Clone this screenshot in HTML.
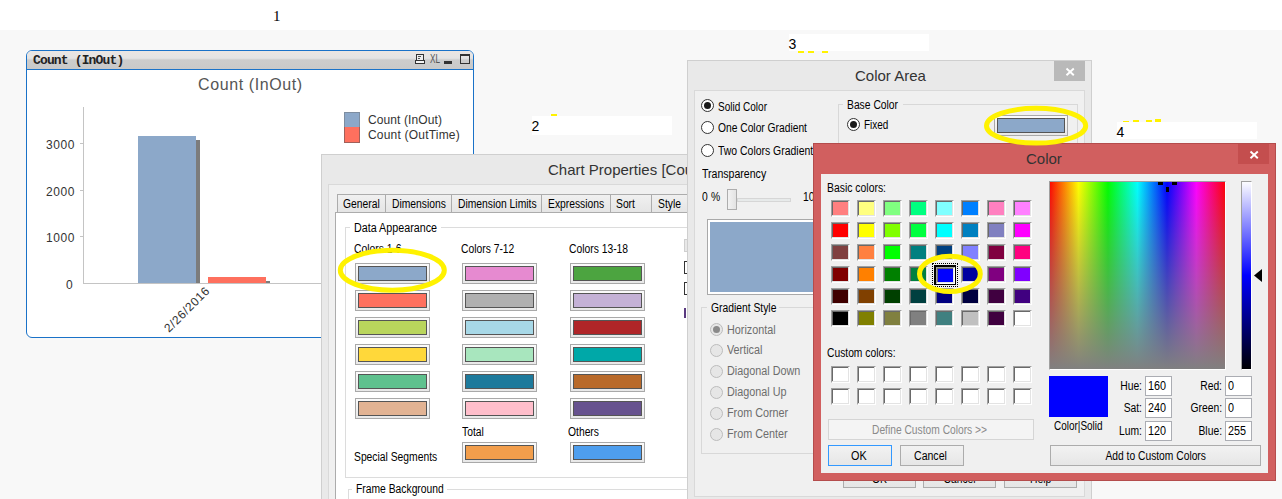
<!DOCTYPE html>
<html><head><meta charset="utf-8">
<style>
*{margin:0;padding:0;box-sizing:border-box}
html,body{width:1282px;height:499px;overflow:hidden;background:#f8f8f8;font-family:"Liberation Sans",sans-serif;font-size:12px;color:#000}
.a{position:absolute}
.t{position:absolute;white-space:nowrap;line-height:1;transform-origin:0 0}
.s{transform:scaleX(.86)}
.bx{position:absolute;box-sizing:border-box}
</style></head><body>
<!-- top white band -->
<div class="a" style="left:0;top:0;width:1282px;height:30px;background:#fff"></div>
<div class="t" style="left:273px;top:9px;font-size:15px;font-family:'Liberation Serif',serif">1</div>

<!-- ============ CHART WINDOW ============ -->
<div class="bx" style="left:26px;top:50px;width:448px;height:288px;border:1px solid #1a72c8;border-radius:6px;background:#fff;overflow:hidden">
  <div class="a" style="left:0;top:0;width:446px;height:19px;background:linear-gradient(#ebe6e3 0,#e4e4e4 40%,#cccccc 50%,#c9c9c9 100%);border-bottom:1px solid #1a72c8"></div>
</div>
<div class="t" style="left:33px;top:54px;font-family:'Liberation Mono',monospace;font-weight:bold;font-size:13px;letter-spacing:-.85px;color:#222">Count (InOut)</div>
<!-- window icons -->
<svg class="a" style="left:412px;top:52px" width="62" height="14" viewBox="0 0 62 14">
  <g fill="none" stroke="#333" stroke-width="1">
    <rect x="4.5" y="2.5" width="7" height="6" fill="#eee"/>
    <rect x="3.5" y="8.5" width="9" height="3" fill="#f4f4f4"/>
    <line x1="6" y1="4.5" x2="9" y2="4.5" stroke="#555"/><line x1="6" y1="6.5" x2="8" y2="6.5" stroke="#555"/>
  </g>
  <text x="18" y="11" font-family="Liberation Sans" font-size="12" fill="#555" textLength="10" lengthAdjust="spacingAndGlyphs">XL</text>
  <rect x="32" y="9" width="8" height="3" fill="#333"/>
  <rect x="48.5" y="2.5" width="9" height="9" fill="none" stroke="#333"/>
  <rect x="48" y="2" width="10" height="2" fill="#333"/>
</svg>
<!-- chart -->
<div class="t" style="left:198px;top:77px;font-size:16px;color:#555;letter-spacing:.6px">Count (InOut)</div>
<div class="a" style="left:83px;top:107px;width:1px;height:177px;background:#c4c4c4"></div>
<div class="a" style="left:83px;top:283px;width:240px;height:1px;background:#c4c4c4"></div>
<div class="a" style="left:80px;top:143px;width:3px;height:1px;background:#c4c4c4"></div>
<div class="a" style="left:80px;top:190px;width:3px;height:1px;background:#c4c4c4"></div>
<div class="a" style="left:80px;top:236px;width:3px;height:1px;background:#c4c4c4"></div>
<div class="t" style="left:46px;top:139px;font-size:12px;color:#333;letter-spacing:.6px">3000</div>
<div class="t" style="left:46px;top:186px;font-size:12px;color:#333;letter-spacing:.6px">2000</div>
<div class="t" style="left:46px;top:232px;font-size:12px;color:#333;letter-spacing:.6px">1000</div>
<div class="t" style="left:66px;top:279px;font-size:12px;color:#333">0</div>
<div class="a" style="left:196px;top:140px;width:4px;height:143px;background:#7c7c7c"></div>
<div class="a" style="left:138px;top:136px;width:58px;height:147px;background:#8ca8c9"></div>
<div class="a" style="left:266px;top:281px;width:4px;height:2px;background:#7c7c7c"></div>
<div class="a" style="left:208px;top:277px;width:58px;height:6px;background:#fe705e"></div>
<div class="t" style="left:162px;top:325.5px;font-size:12px;letter-spacing:.6px;color:#333;transform:rotate(-45deg);transform-origin:0 0">2/26/2016</div>
<!-- legend -->
<div class="bx" style="left:344px;top:112px;width:16px;height:16px;border:1px solid #7d8da0;border-bottom:none;background:#8ca8c9"></div>
<div class="bx" style="left:344px;top:127px;width:16px;height:16px;border:1px solid #a0605a;border-top:none;background:#fe705e"></div>
<div class="t" style="left:368px;top:114px;font-size:12px;letter-spacing:.1px;color:#333">Count (InOut)</div>
<div class="t" style="left:368px;top:129px;font-size:12px;letter-spacing:.2px;color:#333">Count (OutTime)</div>

<!-- ============ "2" label ============ -->
<div class="a" style="left:532px;top:116px;width:140px;height:19px;background:#fff"></div>
<div class="t" style="left:531.5px;top:119px;font-size:14px">2</div>

<!-- ============ CHART PROPERTIES ============ -->
<div class="bx" style="left:321px;top:154px;width:400px;height:360px;border:1px solid #cfcfcf;background:#e9e9e9"></div>
<div class="t" style="left:548px;top:162px;font-size:15px;color:#333">Chart Properties [Cou</div>
<div class="bx" style="left:328px;top:184px;width:400px;height:330px;border:1px solid #d9d9d9;background:#f0f0f0"></div>
<div class="bx" style="left:337px;top:194px;width:49px;height:19px;border:1px solid #acacac;background:linear-gradient(#f0f0f0,#e5e5e5)"></div>
<div class="bx" style="left:385px;top:194px;width:67px;height:19px;border:1px solid #acacac;background:linear-gradient(#f0f0f0,#e5e5e5)"></div>
<div class="bx" style="left:451px;top:194px;width:91px;height:19px;border:1px solid #acacac;background:linear-gradient(#f0f0f0,#e5e5e5)"></div>
<div class="bx" style="left:541px;top:194px;width:70px;height:19px;border:1px solid #acacac;background:linear-gradient(#f0f0f0,#e5e5e5)"></div>
<div class="bx" style="left:610px;top:194px;width:42px;height:19px;border:1px solid #acacac;background:linear-gradient(#f0f0f0,#e5e5e5)"></div>
<div class="bx" style="left:651px;top:194px;width:70px;height:19px;border:1px solid #acacac;background:linear-gradient(#f0f0f0,#e5e5e5)"></div>
<div class="t s" style="left:343px;top:197.5px;font-size:12px;color:#000;">General</div>
<div class="t s" style="left:392px;top:197.5px;font-size:12px;color:#000;">Dimensions</div>
<div class="t s" style="left:458px;top:197.5px;font-size:12px;color:#000;">Dimension Limits</div>
<div class="t s" style="left:548px;top:197.5px;font-size:12px;color:#000;">Expressions</div>
<div class="t s" style="left:616px;top:197.5px;font-size:12px;color:#000;">Sort</div>
<div class="t s" style="left:658px;top:197.5px;font-size:12px;color:#000;">Style</div>
<div class="bx" style="left:335px;top:212px;width:400px;height:300px;border:1px solid #acacac;border-right:none;background:#fff"></div>
<div class="bx" style="left:345px;top:227px;width:400px;height:251px;border:1px solid #dcdcdc;border-right:none"></div>
<div class="a" style="left:350px;top:220px;width:91px;height:14px;background:#fff"></div>
<div class="t s" style="left:354px;top:222px;font-size:12px;color:#000;transform:scaleX(.895)">Data Appearance</div>
<div class="t s" style="left:354px;top:243px;font-size:12px;color:#000;">Colors 1-6</div>
<div class="t s" style="left:461px;top:242.5px;font-size:12px;color:#000;">Colors 7-12</div>
<div class="t s" style="left:569px;top:242.5px;font-size:12px;color:#000;">Colors 13-18</div>
<div class="bx" style="left:355px;top:263px;width:75px;height:21px;border:1px solid #a9a9a9;background:linear-gradient(#fbfbfb,#e8e8e8)"></div>
<div class="bx" style="left:358px;top:266px;width:69px;height:15px;border:1px solid #555;background:#8ca8c9"></div>
<div class="bx" style="left:355px;top:290px;width:75px;height:21px;border:1px solid #a9a9a9;background:linear-gradient(#fbfbfb,#e8e8e8)"></div>
<div class="bx" style="left:358px;top:293px;width:69px;height:15px;border:1px solid #555;background:#fe705e"></div>
<div class="bx" style="left:355px;top:317px;width:75px;height:21px;border:1px solid #a9a9a9;background:linear-gradient(#fbfbfb,#e8e8e8)"></div>
<div class="bx" style="left:358px;top:320px;width:69px;height:15px;border:1px solid #555;background:#b9d55c"></div>
<div class="bx" style="left:355px;top:344px;width:75px;height:21px;border:1px solid #a9a9a9;background:linear-gradient(#fbfbfb,#e8e8e8)"></div>
<div class="bx" style="left:358px;top:347px;width:69px;height:15px;border:1px solid #555;background:#ffd83a"></div>
<div class="bx" style="left:355px;top:371px;width:75px;height:21px;border:1px solid #a9a9a9;background:linear-gradient(#fbfbfb,#e8e8e8)"></div>
<div class="bx" style="left:358px;top:374px;width:69px;height:15px;border:1px solid #555;background:#5fc18e"></div>
<div class="bx" style="left:355px;top:398px;width:75px;height:21px;border:1px solid #a9a9a9;background:linear-gradient(#fbfbfb,#e8e8e8)"></div>
<div class="bx" style="left:358px;top:401px;width:69px;height:15px;border:1px solid #555;background:#e2b393"></div>
<div class="bx" style="left:462px;top:263px;width:75px;height:21px;border:1px solid #a9a9a9;background:linear-gradient(#fbfbfb,#e8e8e8)"></div>
<div class="bx" style="left:465px;top:266px;width:69px;height:15px;border:1px solid #555;background:#e68ad0"></div>
<div class="bx" style="left:462px;top:290px;width:75px;height:21px;border:1px solid #a9a9a9;background:linear-gradient(#fbfbfb,#e8e8e8)"></div>
<div class="bx" style="left:465px;top:293px;width:69px;height:15px;border:1px solid #555;background:#b0b0b0"></div>
<div class="bx" style="left:462px;top:317px;width:75px;height:21px;border:1px solid #a9a9a9;background:linear-gradient(#fbfbfb,#e8e8e8)"></div>
<div class="bx" style="left:465px;top:320px;width:69px;height:15px;border:1px solid #555;background:#a7d8e7"></div>
<div class="bx" style="left:462px;top:344px;width:75px;height:21px;border:1px solid #a9a9a9;background:linear-gradient(#fbfbfb,#e8e8e8)"></div>
<div class="bx" style="left:465px;top:347px;width:69px;height:15px;border:1px solid #555;background:#a8e6be"></div>
<div class="bx" style="left:462px;top:371px;width:75px;height:21px;border:1px solid #a9a9a9;background:linear-gradient(#fbfbfb,#e8e8e8)"></div>
<div class="bx" style="left:465px;top:374px;width:69px;height:15px;border:1px solid #555;background:#1d7a9c"></div>
<div class="bx" style="left:462px;top:398px;width:75px;height:21px;border:1px solid #a9a9a9;background:linear-gradient(#fbfbfb,#e8e8e8)"></div>
<div class="bx" style="left:465px;top:401px;width:69px;height:15px;border:1px solid #555;background:#ffbecb"></div>
<div class="bx" style="left:570px;top:263px;width:75px;height:21px;border:1px solid #a9a9a9;background:linear-gradient(#fbfbfb,#e8e8e8)"></div>
<div class="bx" style="left:573px;top:266px;width:69px;height:15px;border:1px solid #555;background:#4ca440"></div>
<div class="bx" style="left:570px;top:290px;width:75px;height:21px;border:1px solid #a9a9a9;background:linear-gradient(#fbfbfb,#e8e8e8)"></div>
<div class="bx" style="left:573px;top:293px;width:69px;height:15px;border:1px solid #555;background:#c4b1d6"></div>
<div class="bx" style="left:570px;top:317px;width:75px;height:21px;border:1px solid #a9a9a9;background:linear-gradient(#fbfbfb,#e8e8e8)"></div>
<div class="bx" style="left:573px;top:320px;width:69px;height:15px;border:1px solid #555;background:#b02528"></div>
<div class="bx" style="left:570px;top:344px;width:75px;height:21px;border:1px solid #a9a9a9;background:linear-gradient(#fbfbfb,#e8e8e8)"></div>
<div class="bx" style="left:573px;top:347px;width:69px;height:15px;border:1px solid #555;background:#00a8a8"></div>
<div class="bx" style="left:570px;top:371px;width:75px;height:21px;border:1px solid #a9a9a9;background:linear-gradient(#fbfbfb,#e8e8e8)"></div>
<div class="bx" style="left:573px;top:374px;width:69px;height:15px;border:1px solid #555;background:#b96a2a"></div>
<div class="bx" style="left:570px;top:398px;width:75px;height:21px;border:1px solid #a9a9a9;background:linear-gradient(#fbfbfb,#e8e8e8)"></div>
<div class="bx" style="left:573px;top:401px;width:69px;height:15px;border:1px solid #555;background:#67528f"></div>
<div class="t s" style="left:462px;top:426px;font-size:12px;color:#000;">Total</div>
<div class="t s" style="left:568px;top:426px;font-size:12px;color:#000;">Others</div>
<div class="t s" style="left:354px;top:451px;font-size:12px;color:#000;">Special Segments</div>
<div class="bx" style="left:462px;top:442px;width:75px;height:21px;border:1px solid #a9a9a9;background:linear-gradient(#fbfbfb,#e8e8e8)"></div>
<div class="bx" style="left:465px;top:445px;width:69px;height:15px;border:1px solid #555;background:#f29e4c"></div>
<div class="bx" style="left:570px;top:442px;width:75px;height:21px;border:1px solid #a9a9a9;background:linear-gradient(#fbfbfb,#e8e8e8)"></div>
<div class="bx" style="left:573px;top:445px;width:69px;height:15px;border:1px solid #555;background:#4e9eee"></div>
<div class="bx" style="left:348px;top:489px;width:400px;height:30px;border:1px solid #dcdcdc;border-right:none"></div>
<div class="a" style="left:352px;top:482px;width:95px;height:14px;background:#fff"></div>
<div class="t s" style="left:356px;top:483px;font-size:12px;color:#000;">Frame Background</div>
<div class="bx" style="left:684px;top:239px;width:10px;height:13px;border:1px solid #cfcfcf;background:#e8e8e8"></div>
<div class="bx" style="left:684px;top:261px;width:10px;height:13px;border:1px solid #333;background:#fff"></div>
<div class="bx" style="left:684px;top:282px;width:10px;height:13px;border:1px solid #333;background:#fff"></div>
<div class="a" style="left:684px;top:308px;width:2px;height:10px;background:#5a3a80"></div>

<!-- ============ "3" label ============ -->
<div class="a" style="left:789px;top:34px;width:140px;height:17px;background:#fff"></div>
<div class="t" style="left:788.5px;top:37px;font-size:14px">3</div>

<!-- ============ COLOR AREA ============ -->
<div class="bx" style="left:687px;top:60px;width:405px;height:460px;border:1px solid #cfcfcf;background:#e9e9e9"></div>
<div class="bx" style="left:1054px;top:61px;width:31px;height:20px;background:#b9b9b9"></div>
<div class="t" style="left:855px;top:68px;font-size:15px;color:#333">Color Area</div>
<div class="bx" style="left:694px;top:90px;width:391px;height:407px;border:1px solid #d9d9d9;background:#f0f0f0"></div>
<svg class="a" style="left:1054px;top:61px" width="31" height="20"><path d="M12.5 7.5 L19.8 14.3 M19.8 7.5 L12.5 14.3" stroke="#fff" stroke-width="1.9"/></svg>
<div class="bx" style="left:701px;top:99px;width:13px;height:13px;border-radius:50%;border:1px solid #333;background:#fff"></div>
<div class="bx" style="left:704px;top:102px;width:7px;height:7px;border-radius:50%;background:#1a1a1a"></div>
<div class="t s" style="left:718px;top:101px;font-size:12px;color:#000;transform:scaleX(.835)">Solid Color</div>
<div class="bx" style="left:701px;top:121px;width:13px;height:13px;border-radius:50%;border:1px solid #333;background:#fff"></div>
<div class="t s" style="left:718px;top:122px;font-size:12px;color:#000;transform:scaleX(.855)">One Color Gradient</div>
<div class="bx" style="left:701px;top:144px;width:13px;height:13px;border-radius:50%;border:1px solid #333;background:#fff"></div>
<div class="t s" style="left:718px;top:145px;font-size:12px;color:#000;transform:scaleX(.87)">Two Colors Gradient</div>
<div class="t s" style="left:702px;top:167.5px;font-size:12px;color:#000;transform:scaleX(.88)">Transparency</div>
<div class="t s" style="left:702px;top:190.5px;font-size:12px;color:#000;transform:scaleX(.86);letter-spacing:.2px">0 %</div>
<div class="bx" style="left:737px;top:198px;width:54px;height:4px;border:1px solid #d6d6d6;background:#e7eaea"></div>
<div class="bx" style="left:727px;top:189px;width:10px;height:21px;border:1px solid #adadad;background:linear-gradient(90deg,#f2f2f2,#e3e3e3)"></div>
<div class="t s" style="left:803px;top:190.5px;font-size:12px;color:#000;">100 %</div>
<div class="bx" style="left:707px;top:219px;width:140px;height:76px;border:1px solid #a9a9a9;background:#fff"></div>
<div class="a" style="left:710px;top:222px;width:134px;height:70px;background:#8ca8c9"></div>
<div class="bx" style="left:701px;top:307px;width:380px;height:147px;border:1px solid #d8d8d8"></div>
<div class="a" style="left:707px;top:300px;width:72px;height:14px;background:#f0f0f0"></div>
<div class="t s" style="left:711px;top:301.5px;font-size:12px;color:#000;transform:scaleX(.86)">Gradient Style</div>
<div class="bx" style="left:710px;top:323px;width:13px;height:13px;border-radius:50%;border:1px solid #bcbcbc;background:#e6e6e6"></div>
<div class="bx" style="left:713px;top:326px;width:7px;height:7px;border-radius:50%;background:#8a8a8a"></div>
<div class="t s" style="left:727px;top:324px;font-size:12px;color:#6d6d6d;transform:scaleX(.9)">Horizontal</div>
<div class="bx" style="left:710px;top:344px;width:13px;height:13px;border-radius:50%;border:1px solid #bcbcbc;background:#e6e6e6"></div>
<div class="t s" style="left:727px;top:344px;font-size:12px;color:#6d6d6d;transform:scaleX(.9)">Vertical</div>
<div class="bx" style="left:710px;top:365px;width:13px;height:13px;border-radius:50%;border:1px solid #bcbcbc;background:#e6e6e6"></div>
<div class="t s" style="left:727px;top:365px;font-size:12px;color:#6d6d6d;transform:scaleX(.9)">Diagonal Down</div>
<div class="bx" style="left:710px;top:386px;width:13px;height:13px;border-radius:50%;border:1px solid #bcbcbc;background:#e6e6e6"></div>
<div class="t s" style="left:727px;top:386px;font-size:12px;color:#6d6d6d;transform:scaleX(.9)">Diagonal Up</div>
<div class="bx" style="left:710px;top:407px;width:13px;height:13px;border-radius:50%;border:1px solid #bcbcbc;background:#e6e6e6"></div>
<div class="t s" style="left:727px;top:407px;font-size:12px;color:#6d6d6d;transform:scaleX(.9)">From Corner</div>
<div class="bx" style="left:710px;top:428px;width:13px;height:13px;border-radius:50%;border:1px solid #bcbcbc;background:#e6e6e6"></div>
<div class="t s" style="left:727px;top:428px;font-size:12px;color:#6d6d6d;transform:scaleX(.9)">From Center</div>
<div class="bx" style="left:838px;top:104px;width:240px;height:200px;border:1px solid #d8d8d8"></div>
<div class="a" style="left:843px;top:97px;width:60px;height:14px;background:#f0f0f0"></div>
<div class="t s" style="left:847px;top:98.7px;font-size:12px;color:#000;transform:scaleX(.86)">Base Color</div>
<div class="bx" style="left:847px;top:118px;width:13px;height:13px;border-radius:50%;border:1px solid #333;background:#fff"></div>
<div class="bx" style="left:850px;top:121px;width:7px;height:7px;border-radius:50%;background:#1a1a1a"></div>
<div class="t s" style="left:864px;top:118.5px;font-size:12px;color:#000;transform:scaleX(.83)">Fixed</div>
<div class="bx" style="left:994px;top:115px;width:74px;height:21px;border:1px solid #a9a9a9;background:linear-gradient(#fbfbfb,#e8e8e8)"></div>
<div class="bx" style="left:997px;top:118px;width:68px;height:15px;border:1px solid #555;background:#8ca8c9"></div>
<div class="bx" style="left:843px;top:464px;width:73px;height:24px;border:1px solid #acacac;background:linear-gradient(#f0f0f0,#e5e5e5)"></div>
<div class="t s" style="left:843px;top:473px;width:85px;text-align:center;font-size:12px">OK</div>
<div class="bx" style="left:923px;top:464px;width:73px;height:24px;border:1px solid #acacac;background:linear-gradient(#f0f0f0,#e5e5e5)"></div>
<div class="t s" style="left:923px;top:473px;width:85px;text-align:center;font-size:12px">Cancel</div>
<div class="bx" style="left:1004px;top:464px;width:73px;height:24px;border:1px solid #acacac;background:linear-gradient(#f0f0f0,#e5e5e5)"></div>
<div class="t s" style="left:1004px;top:473px;width:85px;text-align:center;font-size:12px">Help</div>

<!-- ============ "4" label ============ -->
<div class="a" style="left:1117px;top:122px;width:140px;height:17px;background:#fff"></div>
<div class="t" style="left:1116.5px;top:125px;font-size:14px">4</div>

<!-- ============ COLOR DIALOG ============ -->
<div class="bx" style="left:813px;top:143px;width:463px;height:338px;background:#d15f5f;border:1px solid #b44c4c"></div>
<div class="bx" style="left:1238px;top:144px;width:31px;height:20px;background:#c44e4e"></div>
<div class="t" style="left:1026px;top:151px;font-size:15px;color:#333">Color</div>
<div class="bx" style="left:821px;top:174px;width:447px;height:299px;background:#f0f0f0"></div>
<div class="a" style="left:1049px;top:181px;width:177px;height:189px;background:linear-gradient(90deg,#f00,#ff0 16.7%,#0f0 33.3%,#0ff 50%,#00f 66.7%,#f0f 83.3%,#f00)"></div>
<div class="a" style="left:1049px;top:181px;width:177px;height:189px;background:linear-gradient(rgba(128,128,128,0),#808080)"></div>
<div class="a" style="left:1241px;top:181px;width:11px;height:189px;background:linear-gradient(#fff,#00f 50%,#000)"></div>
<svg class="a" style="left:1238px;top:144px" width="31" height="20"><path d="M12.5 7.5 L19.8 14.3 M19.8 7.5 L12.5 14.3" stroke="#fff" stroke-width="1.9"/></svg>
<div class="t s" style="left:827px;top:181.7px;font-size:12px;color:#000;transform:scaleX(.867)">Basic colors:</div>
<div class="bx" style="left:831px;top:200px;width:19px;height:17px;border-style:solid;border-width:1px;border-color:#a0a0a0 #fff #fff #a0a0a0;background:#e3e3e3"></div>
<div class="bx" style="left:832px;top:201px;width:16px;height:14px;border-style:solid;border-width:1px 0 0 1px;border-color:#696969;background:#FF8080"></div>
<div class="bx" style="left:857px;top:200px;width:19px;height:17px;border-style:solid;border-width:1px;border-color:#a0a0a0 #fff #fff #a0a0a0;background:#e3e3e3"></div>
<div class="bx" style="left:858px;top:201px;width:16px;height:14px;border-style:solid;border-width:1px 0 0 1px;border-color:#696969;background:#FFFF80"></div>
<div class="bx" style="left:883px;top:200px;width:19px;height:17px;border-style:solid;border-width:1px;border-color:#a0a0a0 #fff #fff #a0a0a0;background:#e3e3e3"></div>
<div class="bx" style="left:884px;top:201px;width:16px;height:14px;border-style:solid;border-width:1px 0 0 1px;border-color:#696969;background:#80FF80"></div>
<div class="bx" style="left:909px;top:200px;width:19px;height:17px;border-style:solid;border-width:1px;border-color:#a0a0a0 #fff #fff #a0a0a0;background:#e3e3e3"></div>
<div class="bx" style="left:910px;top:201px;width:16px;height:14px;border-style:solid;border-width:1px 0 0 1px;border-color:#696969;background:#00FF80"></div>
<div class="bx" style="left:935px;top:200px;width:19px;height:17px;border-style:solid;border-width:1px;border-color:#a0a0a0 #fff #fff #a0a0a0;background:#e3e3e3"></div>
<div class="bx" style="left:936px;top:201px;width:16px;height:14px;border-style:solid;border-width:1px 0 0 1px;border-color:#696969;background:#80FFFF"></div>
<div class="bx" style="left:961px;top:200px;width:19px;height:17px;border-style:solid;border-width:1px;border-color:#a0a0a0 #fff #fff #a0a0a0;background:#e3e3e3"></div>
<div class="bx" style="left:962px;top:201px;width:16px;height:14px;border-style:solid;border-width:1px 0 0 1px;border-color:#696969;background:#0080FF"></div>
<div class="bx" style="left:987px;top:200px;width:19px;height:17px;border-style:solid;border-width:1px;border-color:#a0a0a0 #fff #fff #a0a0a0;background:#e3e3e3"></div>
<div class="bx" style="left:988px;top:201px;width:16px;height:14px;border-style:solid;border-width:1px 0 0 1px;border-color:#696969;background:#FF80C0"></div>
<div class="bx" style="left:1013px;top:200px;width:19px;height:17px;border-style:solid;border-width:1px;border-color:#a0a0a0 #fff #fff #a0a0a0;background:#e3e3e3"></div>
<div class="bx" style="left:1014px;top:201px;width:16px;height:14px;border-style:solid;border-width:1px 0 0 1px;border-color:#696969;background:#FF80FF"></div>
<div class="bx" style="left:831px;top:222px;width:19px;height:17px;border-style:solid;border-width:1px;border-color:#a0a0a0 #fff #fff #a0a0a0;background:#e3e3e3"></div>
<div class="bx" style="left:832px;top:223px;width:16px;height:14px;border-style:solid;border-width:1px 0 0 1px;border-color:#696969;background:#FF0000"></div>
<div class="bx" style="left:857px;top:222px;width:19px;height:17px;border-style:solid;border-width:1px;border-color:#a0a0a0 #fff #fff #a0a0a0;background:#e3e3e3"></div>
<div class="bx" style="left:858px;top:223px;width:16px;height:14px;border-style:solid;border-width:1px 0 0 1px;border-color:#696969;background:#FFFF00"></div>
<div class="bx" style="left:883px;top:222px;width:19px;height:17px;border-style:solid;border-width:1px;border-color:#a0a0a0 #fff #fff #a0a0a0;background:#e3e3e3"></div>
<div class="bx" style="left:884px;top:223px;width:16px;height:14px;border-style:solid;border-width:1px 0 0 1px;border-color:#696969;background:#80FF00"></div>
<div class="bx" style="left:909px;top:222px;width:19px;height:17px;border-style:solid;border-width:1px;border-color:#a0a0a0 #fff #fff #a0a0a0;background:#e3e3e3"></div>
<div class="bx" style="left:910px;top:223px;width:16px;height:14px;border-style:solid;border-width:1px 0 0 1px;border-color:#696969;background:#00FF40"></div>
<div class="bx" style="left:935px;top:222px;width:19px;height:17px;border-style:solid;border-width:1px;border-color:#a0a0a0 #fff #fff #a0a0a0;background:#e3e3e3"></div>
<div class="bx" style="left:936px;top:223px;width:16px;height:14px;border-style:solid;border-width:1px 0 0 1px;border-color:#696969;background:#00FFFF"></div>
<div class="bx" style="left:961px;top:222px;width:19px;height:17px;border-style:solid;border-width:1px;border-color:#a0a0a0 #fff #fff #a0a0a0;background:#e3e3e3"></div>
<div class="bx" style="left:962px;top:223px;width:16px;height:14px;border-style:solid;border-width:1px 0 0 1px;border-color:#696969;background:#0080C0"></div>
<div class="bx" style="left:987px;top:222px;width:19px;height:17px;border-style:solid;border-width:1px;border-color:#a0a0a0 #fff #fff #a0a0a0;background:#e3e3e3"></div>
<div class="bx" style="left:988px;top:223px;width:16px;height:14px;border-style:solid;border-width:1px 0 0 1px;border-color:#696969;background:#8080C0"></div>
<div class="bx" style="left:1013px;top:222px;width:19px;height:17px;border-style:solid;border-width:1px;border-color:#a0a0a0 #fff #fff #a0a0a0;background:#e3e3e3"></div>
<div class="bx" style="left:1014px;top:223px;width:16px;height:14px;border-style:solid;border-width:1px 0 0 1px;border-color:#696969;background:#FF00FF"></div>
<div class="bx" style="left:831px;top:244px;width:19px;height:17px;border-style:solid;border-width:1px;border-color:#a0a0a0 #fff #fff #a0a0a0;background:#e3e3e3"></div>
<div class="bx" style="left:832px;top:245px;width:16px;height:14px;border-style:solid;border-width:1px 0 0 1px;border-color:#696969;background:#804040"></div>
<div class="bx" style="left:857px;top:244px;width:19px;height:17px;border-style:solid;border-width:1px;border-color:#a0a0a0 #fff #fff #a0a0a0;background:#e3e3e3"></div>
<div class="bx" style="left:858px;top:245px;width:16px;height:14px;border-style:solid;border-width:1px 0 0 1px;border-color:#696969;background:#FF8040"></div>
<div class="bx" style="left:883px;top:244px;width:19px;height:17px;border-style:solid;border-width:1px;border-color:#a0a0a0 #fff #fff #a0a0a0;background:#e3e3e3"></div>
<div class="bx" style="left:884px;top:245px;width:16px;height:14px;border-style:solid;border-width:1px 0 0 1px;border-color:#696969;background:#00FF00"></div>
<div class="bx" style="left:909px;top:244px;width:19px;height:17px;border-style:solid;border-width:1px;border-color:#a0a0a0 #fff #fff #a0a0a0;background:#e3e3e3"></div>
<div class="bx" style="left:910px;top:245px;width:16px;height:14px;border-style:solid;border-width:1px 0 0 1px;border-color:#696969;background:#008080"></div>
<div class="bx" style="left:935px;top:244px;width:19px;height:17px;border-style:solid;border-width:1px;border-color:#a0a0a0 #fff #fff #a0a0a0;background:#e3e3e3"></div>
<div class="bx" style="left:936px;top:245px;width:16px;height:14px;border-style:solid;border-width:1px 0 0 1px;border-color:#696969;background:#004080"></div>
<div class="bx" style="left:961px;top:244px;width:19px;height:17px;border-style:solid;border-width:1px;border-color:#a0a0a0 #fff #fff #a0a0a0;background:#e3e3e3"></div>
<div class="bx" style="left:962px;top:245px;width:16px;height:14px;border-style:solid;border-width:1px 0 0 1px;border-color:#696969;background:#8080FF"></div>
<div class="bx" style="left:987px;top:244px;width:19px;height:17px;border-style:solid;border-width:1px;border-color:#a0a0a0 #fff #fff #a0a0a0;background:#e3e3e3"></div>
<div class="bx" style="left:988px;top:245px;width:16px;height:14px;border-style:solid;border-width:1px 0 0 1px;border-color:#696969;background:#800040"></div>
<div class="bx" style="left:1013px;top:244px;width:19px;height:17px;border-style:solid;border-width:1px;border-color:#a0a0a0 #fff #fff #a0a0a0;background:#e3e3e3"></div>
<div class="bx" style="left:1014px;top:245px;width:16px;height:14px;border-style:solid;border-width:1px 0 0 1px;border-color:#696969;background:#FF0080"></div>
<div class="bx" style="left:831px;top:266px;width:19px;height:17px;border-style:solid;border-width:1px;border-color:#a0a0a0 #fff #fff #a0a0a0;background:#e3e3e3"></div>
<div class="bx" style="left:832px;top:267px;width:16px;height:14px;border-style:solid;border-width:1px 0 0 1px;border-color:#696969;background:#800000"></div>
<div class="bx" style="left:857px;top:266px;width:19px;height:17px;border-style:solid;border-width:1px;border-color:#a0a0a0 #fff #fff #a0a0a0;background:#e3e3e3"></div>
<div class="bx" style="left:858px;top:267px;width:16px;height:14px;border-style:solid;border-width:1px 0 0 1px;border-color:#696969;background:#FF8000"></div>
<div class="bx" style="left:883px;top:266px;width:19px;height:17px;border-style:solid;border-width:1px;border-color:#a0a0a0 #fff #fff #a0a0a0;background:#e3e3e3"></div>
<div class="bx" style="left:884px;top:267px;width:16px;height:14px;border-style:solid;border-width:1px 0 0 1px;border-color:#696969;background:#008000"></div>
<div class="bx" style="left:909px;top:266px;width:19px;height:17px;border-style:solid;border-width:1px;border-color:#a0a0a0 #fff #fff #a0a0a0;background:#e3e3e3"></div>
<div class="bx" style="left:910px;top:267px;width:16px;height:14px;border-style:solid;border-width:1px 0 0 1px;border-color:#696969;background:#008040"></div>
<div class="bx" style="left:935px;top:266px;width:19px;height:17px;border-style:solid;border-width:1px;border-color:#a0a0a0 #fff #fff #a0a0a0;background:#e3e3e3"></div>
<div class="bx" style="left:936px;top:267px;width:16px;height:14px;border-style:solid;border-width:1px 0 0 1px;border-color:#696969;background:#0000FF"></div>
<div class="bx" style="left:961px;top:266px;width:19px;height:17px;border-style:solid;border-width:1px;border-color:#a0a0a0 #fff #fff #a0a0a0;background:#e3e3e3"></div>
<div class="bx" style="left:962px;top:267px;width:16px;height:14px;border-style:solid;border-width:1px 0 0 1px;border-color:#696969;background:#0000A0"></div>
<div class="bx" style="left:987px;top:266px;width:19px;height:17px;border-style:solid;border-width:1px;border-color:#a0a0a0 #fff #fff #a0a0a0;background:#e3e3e3"></div>
<div class="bx" style="left:988px;top:267px;width:16px;height:14px;border-style:solid;border-width:1px 0 0 1px;border-color:#696969;background:#800080"></div>
<div class="bx" style="left:1013px;top:266px;width:19px;height:17px;border-style:solid;border-width:1px;border-color:#a0a0a0 #fff #fff #a0a0a0;background:#e3e3e3"></div>
<div class="bx" style="left:1014px;top:267px;width:16px;height:14px;border-style:solid;border-width:1px 0 0 1px;border-color:#696969;background:#8000FF"></div>
<div class="bx" style="left:831px;top:288px;width:19px;height:17px;border-style:solid;border-width:1px;border-color:#a0a0a0 #fff #fff #a0a0a0;background:#e3e3e3"></div>
<div class="bx" style="left:832px;top:289px;width:16px;height:14px;border-style:solid;border-width:1px 0 0 1px;border-color:#696969;background:#400000"></div>
<div class="bx" style="left:857px;top:288px;width:19px;height:17px;border-style:solid;border-width:1px;border-color:#a0a0a0 #fff #fff #a0a0a0;background:#e3e3e3"></div>
<div class="bx" style="left:858px;top:289px;width:16px;height:14px;border-style:solid;border-width:1px 0 0 1px;border-color:#696969;background:#804000"></div>
<div class="bx" style="left:883px;top:288px;width:19px;height:17px;border-style:solid;border-width:1px;border-color:#a0a0a0 #fff #fff #a0a0a0;background:#e3e3e3"></div>
<div class="bx" style="left:884px;top:289px;width:16px;height:14px;border-style:solid;border-width:1px 0 0 1px;border-color:#696969;background:#004000"></div>
<div class="bx" style="left:909px;top:288px;width:19px;height:17px;border-style:solid;border-width:1px;border-color:#a0a0a0 #fff #fff #a0a0a0;background:#e3e3e3"></div>
<div class="bx" style="left:910px;top:289px;width:16px;height:14px;border-style:solid;border-width:1px 0 0 1px;border-color:#696969;background:#004040"></div>
<div class="bx" style="left:935px;top:288px;width:19px;height:17px;border-style:solid;border-width:1px;border-color:#a0a0a0 #fff #fff #a0a0a0;background:#e3e3e3"></div>
<div class="bx" style="left:936px;top:289px;width:16px;height:14px;border-style:solid;border-width:1px 0 0 1px;border-color:#696969;background:#000080"></div>
<div class="bx" style="left:961px;top:288px;width:19px;height:17px;border-style:solid;border-width:1px;border-color:#a0a0a0 #fff #fff #a0a0a0;background:#e3e3e3"></div>
<div class="bx" style="left:962px;top:289px;width:16px;height:14px;border-style:solid;border-width:1px 0 0 1px;border-color:#696969;background:#000040"></div>
<div class="bx" style="left:987px;top:288px;width:19px;height:17px;border-style:solid;border-width:1px;border-color:#a0a0a0 #fff #fff #a0a0a0;background:#e3e3e3"></div>
<div class="bx" style="left:988px;top:289px;width:16px;height:14px;border-style:solid;border-width:1px 0 0 1px;border-color:#696969;background:#400040"></div>
<div class="bx" style="left:1013px;top:288px;width:19px;height:17px;border-style:solid;border-width:1px;border-color:#a0a0a0 #fff #fff #a0a0a0;background:#e3e3e3"></div>
<div class="bx" style="left:1014px;top:289px;width:16px;height:14px;border-style:solid;border-width:1px 0 0 1px;border-color:#696969;background:#400080"></div>
<div class="bx" style="left:831px;top:310px;width:19px;height:17px;border-style:solid;border-width:1px;border-color:#a0a0a0 #fff #fff #a0a0a0;background:#e3e3e3"></div>
<div class="bx" style="left:832px;top:311px;width:16px;height:14px;border-style:solid;border-width:1px 0 0 1px;border-color:#696969;background:#000000"></div>
<div class="bx" style="left:857px;top:310px;width:19px;height:17px;border-style:solid;border-width:1px;border-color:#a0a0a0 #fff #fff #a0a0a0;background:#e3e3e3"></div>
<div class="bx" style="left:858px;top:311px;width:16px;height:14px;border-style:solid;border-width:1px 0 0 1px;border-color:#696969;background:#808000"></div>
<div class="bx" style="left:883px;top:310px;width:19px;height:17px;border-style:solid;border-width:1px;border-color:#a0a0a0 #fff #fff #a0a0a0;background:#e3e3e3"></div>
<div class="bx" style="left:884px;top:311px;width:16px;height:14px;border-style:solid;border-width:1px 0 0 1px;border-color:#696969;background:#808040"></div>
<div class="bx" style="left:909px;top:310px;width:19px;height:17px;border-style:solid;border-width:1px;border-color:#a0a0a0 #fff #fff #a0a0a0;background:#e3e3e3"></div>
<div class="bx" style="left:910px;top:311px;width:16px;height:14px;border-style:solid;border-width:1px 0 0 1px;border-color:#696969;background:#808080"></div>
<div class="bx" style="left:935px;top:310px;width:19px;height:17px;border-style:solid;border-width:1px;border-color:#a0a0a0 #fff #fff #a0a0a0;background:#e3e3e3"></div>
<div class="bx" style="left:936px;top:311px;width:16px;height:14px;border-style:solid;border-width:1px 0 0 1px;border-color:#696969;background:#408080"></div>
<div class="bx" style="left:961px;top:310px;width:19px;height:17px;border-style:solid;border-width:1px;border-color:#a0a0a0 #fff #fff #a0a0a0;background:#e3e3e3"></div>
<div class="bx" style="left:962px;top:311px;width:16px;height:14px;border-style:solid;border-width:1px 0 0 1px;border-color:#696969;background:#C0C0C0"></div>
<div class="bx" style="left:987px;top:310px;width:19px;height:17px;border-style:solid;border-width:1px;border-color:#a0a0a0 #fff #fff #a0a0a0;background:#e3e3e3"></div>
<div class="bx" style="left:988px;top:311px;width:16px;height:14px;border-style:solid;border-width:1px 0 0 1px;border-color:#696969;background:#400040"></div>
<div class="bx" style="left:1013px;top:310px;width:19px;height:17px;border-style:solid;border-width:1px;border-color:#a0a0a0 #fff #fff #a0a0a0;background:#e3e3e3"></div>
<div class="bx" style="left:1014px;top:311px;width:16px;height:14px;border-style:solid;border-width:1px 0 0 1px;border-color:#696969;background:#FFFFFF"></div>
<div class="bx" style="left:932px;top:263px;width:26px;height:24px;border:1px dotted #000"></div>
<div class="bx" style="left:934px;top:265px;width:22px;height:20px;border:2px solid #000"></div>
<div class="bx" style="left:936px;top:267px;width:19px;height:17px;border-style:solid;border-width:1px;border-color:#a0a0a0 #fff #fff #a0a0a0;background:#e3e3e3"></div>
<div class="bx" style="left:937px;top:268px;width:16px;height:14px;border-style:solid;border-width:1px 0 0 1px;border-color:#696969;background:#0000FF"></div>
<div class="t s" style="left:827px;top:347px;font-size:12px;color:#000;transform:scaleX(.857)">Custom colors:</div>
<div class="bx" style="left:831px;top:366px;width:19px;height:17px;border-style:solid;border-width:1px;border-color:#a0a0a0 #fff #fff #a0a0a0;background:#e3e3e3"></div>
<div class="bx" style="left:832px;top:367px;width:16px;height:14px;border-style:solid;border-width:1px 0 0 1px;border-color:#696969;background:#FFFFFF"></div>
<div class="bx" style="left:857px;top:366px;width:19px;height:17px;border-style:solid;border-width:1px;border-color:#a0a0a0 #fff #fff #a0a0a0;background:#e3e3e3"></div>
<div class="bx" style="left:858px;top:367px;width:16px;height:14px;border-style:solid;border-width:1px 0 0 1px;border-color:#696969;background:#FFFFFF"></div>
<div class="bx" style="left:883px;top:366px;width:19px;height:17px;border-style:solid;border-width:1px;border-color:#a0a0a0 #fff #fff #a0a0a0;background:#e3e3e3"></div>
<div class="bx" style="left:884px;top:367px;width:16px;height:14px;border-style:solid;border-width:1px 0 0 1px;border-color:#696969;background:#FFFFFF"></div>
<div class="bx" style="left:909px;top:366px;width:19px;height:17px;border-style:solid;border-width:1px;border-color:#a0a0a0 #fff #fff #a0a0a0;background:#e3e3e3"></div>
<div class="bx" style="left:910px;top:367px;width:16px;height:14px;border-style:solid;border-width:1px 0 0 1px;border-color:#696969;background:#FFFFFF"></div>
<div class="bx" style="left:935px;top:366px;width:19px;height:17px;border-style:solid;border-width:1px;border-color:#a0a0a0 #fff #fff #a0a0a0;background:#e3e3e3"></div>
<div class="bx" style="left:936px;top:367px;width:16px;height:14px;border-style:solid;border-width:1px 0 0 1px;border-color:#696969;background:#FFFFFF"></div>
<div class="bx" style="left:961px;top:366px;width:19px;height:17px;border-style:solid;border-width:1px;border-color:#a0a0a0 #fff #fff #a0a0a0;background:#e3e3e3"></div>
<div class="bx" style="left:962px;top:367px;width:16px;height:14px;border-style:solid;border-width:1px 0 0 1px;border-color:#696969;background:#FFFFFF"></div>
<div class="bx" style="left:987px;top:366px;width:19px;height:17px;border-style:solid;border-width:1px;border-color:#a0a0a0 #fff #fff #a0a0a0;background:#e3e3e3"></div>
<div class="bx" style="left:988px;top:367px;width:16px;height:14px;border-style:solid;border-width:1px 0 0 1px;border-color:#696969;background:#FFFFFF"></div>
<div class="bx" style="left:1013px;top:366px;width:19px;height:17px;border-style:solid;border-width:1px;border-color:#a0a0a0 #fff #fff #a0a0a0;background:#e3e3e3"></div>
<div class="bx" style="left:1014px;top:367px;width:16px;height:14px;border-style:solid;border-width:1px 0 0 1px;border-color:#696969;background:#FFFFFF"></div>
<div class="bx" style="left:831px;top:388px;width:19px;height:17px;border-style:solid;border-width:1px;border-color:#a0a0a0 #fff #fff #a0a0a0;background:#e3e3e3"></div>
<div class="bx" style="left:832px;top:389px;width:16px;height:14px;border-style:solid;border-width:1px 0 0 1px;border-color:#696969;background:#FFFFFF"></div>
<div class="bx" style="left:857px;top:388px;width:19px;height:17px;border-style:solid;border-width:1px;border-color:#a0a0a0 #fff #fff #a0a0a0;background:#e3e3e3"></div>
<div class="bx" style="left:858px;top:389px;width:16px;height:14px;border-style:solid;border-width:1px 0 0 1px;border-color:#696969;background:#FFFFFF"></div>
<div class="bx" style="left:883px;top:388px;width:19px;height:17px;border-style:solid;border-width:1px;border-color:#a0a0a0 #fff #fff #a0a0a0;background:#e3e3e3"></div>
<div class="bx" style="left:884px;top:389px;width:16px;height:14px;border-style:solid;border-width:1px 0 0 1px;border-color:#696969;background:#FFFFFF"></div>
<div class="bx" style="left:909px;top:388px;width:19px;height:17px;border-style:solid;border-width:1px;border-color:#a0a0a0 #fff #fff #a0a0a0;background:#e3e3e3"></div>
<div class="bx" style="left:910px;top:389px;width:16px;height:14px;border-style:solid;border-width:1px 0 0 1px;border-color:#696969;background:#FFFFFF"></div>
<div class="bx" style="left:935px;top:388px;width:19px;height:17px;border-style:solid;border-width:1px;border-color:#a0a0a0 #fff #fff #a0a0a0;background:#e3e3e3"></div>
<div class="bx" style="left:936px;top:389px;width:16px;height:14px;border-style:solid;border-width:1px 0 0 1px;border-color:#696969;background:#FFFFFF"></div>
<div class="bx" style="left:961px;top:388px;width:19px;height:17px;border-style:solid;border-width:1px;border-color:#a0a0a0 #fff #fff #a0a0a0;background:#e3e3e3"></div>
<div class="bx" style="left:962px;top:389px;width:16px;height:14px;border-style:solid;border-width:1px 0 0 1px;border-color:#696969;background:#FFFFFF"></div>
<div class="bx" style="left:987px;top:388px;width:19px;height:17px;border-style:solid;border-width:1px;border-color:#a0a0a0 #fff #fff #a0a0a0;background:#e3e3e3"></div>
<div class="bx" style="left:988px;top:389px;width:16px;height:14px;border-style:solid;border-width:1px 0 0 1px;border-color:#696969;background:#FFFFFF"></div>
<div class="bx" style="left:1013px;top:388px;width:19px;height:17px;border-style:solid;border-width:1px;border-color:#a0a0a0 #fff #fff #a0a0a0;background:#e3e3e3"></div>
<div class="bx" style="left:1014px;top:389px;width:16px;height:14px;border-style:solid;border-width:1px 0 0 1px;border-color:#696969;background:#FFFFFF"></div>
<div class="bx" style="left:828px;top:419px;width:206px;height:21px;border:1px solid #d5d5d5;background:#f4f4f4"></div>
<div class="t s" style="left:872px;top:424px;font-size:12px;color:#8a8a8a;transform:scaleX(.854)">Define Custom Colors &gt;&gt;</div>
<div class="bx" style="left:828px;top:445px;width:64px;height:21px;border:1px solid #3399ff;background:linear-gradient(#f2f2f2,#e6e6e6)"></div>
<div class="t s" style="left:851px;top:449.5px;font-size:12px;color:#000;transform:scaleX(.9)">OK</div>
<div class="bx" style="left:900px;top:445px;width:64px;height:21px;border:1px solid #acacac;background:linear-gradient(#f2f2f2,#e6e6e6)"></div>
<div class="t s" style="left:914px;top:449.5px;font-size:12px;color:#000;transform:scaleX(.88)">Cancel</div>
<div class="bx" style="left:1049px;top:181px;width:177px;height:189px;border:1px solid #a0a0a0;border-right-color:#fff;border-bottom-color:#fff"></div>
<div class="a" style="left:1158px;top:182px;width:5px;height:3px;background:#000"></div>
<div class="a" style="left:1172px;top:182px;width:5px;height:3px;background:#000"></div>
<div class="a" style="left:1166px;top:187px;width:3px;height:5px;background:#000"></div>
<div class="bx" style="left:1241px;top:181px;width:11px;height:189px;border:1px solid #a0a0a0;border-right-color:#fff;border-bottom-color:#fff"></div>
<svg class="a" style="left:1253px;top:268px" width="10" height="16"><path d="M1 7.5 L9 1 L9 14 Z" fill="#000"/></svg>
<div class="a" style="left:1049px;top:376px;width:59px;height:41px;background:#0000ff"></div>
<div class="t s" style="left:1054px;top:420px;font-size:12px;color:#000;transform:scaleX(.83)">Color|Solid</div>
<div class="bx" style="left:1145px;top:376px;width:27px;height:20px;border:1px solid #abadb3;background:#fff"></div>
<div class="t s" style="left:1148px;top:380px;font-size:12px;color:#000;transform:scaleX(.9)">160</div>
<div class="bx" style="left:1225px;top:376px;width:27px;height:20px;border:1px solid #abadb3;background:#fff"></div>
<div class="t s" style="left:1228px;top:380px;font-size:12px;color:#000;transform:scaleX(.9)">0</div>
<div class="t s" style="left:1228px;top:380px;width:100px;text-align:right;font-size:12px;transform-origin:100% 0;left:1042px">Hue:</div>
<div class="t s" style="left:1122px;top:380px;width:100px;text-align:right;font-size:12px;transform-origin:100% 0">Red:</div>
<div class="bx" style="left:1145px;top:398px;width:27px;height:20px;border:1px solid #abadb3;background:#fff"></div>
<div class="t s" style="left:1148px;top:402px;font-size:12px;color:#000;transform:scaleX(.9)">240</div>
<div class="bx" style="left:1225px;top:398px;width:27px;height:20px;border:1px solid #abadb3;background:#fff"></div>
<div class="t s" style="left:1228px;top:402px;font-size:12px;color:#000;transform:scaleX(.9)">0</div>
<div class="t s" style="left:1228px;top:402px;width:100px;text-align:right;font-size:12px;transform-origin:100% 0;left:1042px">Sat:</div>
<div class="t s" style="left:1122px;top:402px;width:100px;text-align:right;font-size:12px;transform-origin:100% 0">Green:</div>
<div class="bx" style="left:1145px;top:421px;width:27px;height:20px;border:1px solid #abadb3;background:#fff"></div>
<div class="t s" style="left:1148px;top:425px;font-size:12px;color:#000;transform:scaleX(.9)">120</div>
<div class="bx" style="left:1225px;top:421px;width:27px;height:20px;border:1px solid #abadb3;background:#fff"></div>
<div class="t s" style="left:1228px;top:425px;font-size:12px;color:#000;transform:scaleX(.9)">255</div>
<div class="t s" style="left:1228px;top:425px;width:100px;text-align:right;font-size:12px;transform-origin:100% 0;left:1042px">Lum:</div>
<div class="t s" style="left:1122px;top:425px;width:100px;text-align:right;font-size:12px;transform-origin:100% 0">Blue:</div>
<div class="bx" style="left:1050px;top:445px;width:211px;height:21px;border:1px solid #acacac;background:linear-gradient(#f2f2f2,#e6e6e6)"></div>
<div class="t" style="left:1050px;top:450px;width:211px;text-align:center;font-size:12px"><span style="display:inline-block;transform:scaleX(.856)">Add to Custom Colors</span></div>
<svg class="a" style="left:0;top:0" width="1282" height="499">
<g fill="none" stroke="#fff200" stroke-width="5">
<ellipse cx="392.3" cy="270.3" rx="52" ry="20"/>
<ellipse cx="1036.1" cy="125.7" rx="49.6" ry="17.4"/>
<ellipse cx="949.9" cy="273.9" rx="30.4" ry="17.6"/>
</g>
<g fill="#fff200">
<rect x="551" y="114" width="6" height="2"/>
<rect x="798" y="51" width="6" height="2"/>
<rect x="808" y="51" width="6" height="2"/>
<rect x="822" y="51" width="6" height="2"/>
<rect x="1123" y="121" width="6" height="1"/>
<rect x="1133" y="120" width="6" height="2"/>
<rect x="1146" y="120" width="6" height="2"/>
<rect x="1155" y="119" width="6" height="3"/>
</g>
</svg>
</body></html>
